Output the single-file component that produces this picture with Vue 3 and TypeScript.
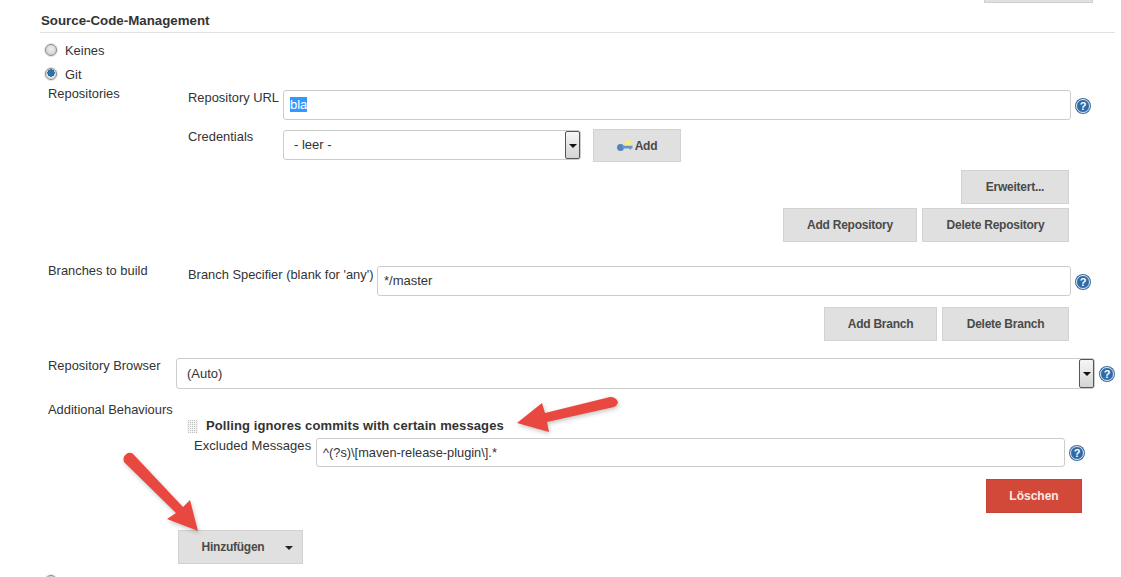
<script setup lang="ts">
const none = 'Keines'
</script>

<template>
  <div class="page">
    <div class="topbar"><div class="top-btn"></div></div>
    <h2 class="heading">Source-Code-Management</h2>
    <div class="body">
      <div class="radio-row"><span class="radio"></span><span>{{ none }}</span></div>
      <div class="radio-row"><span class="radio on"></span><span>Git</span></div>

      <div class="section repos">
        <div class="side">Repositories</div>
        <div class="main">
          <div class="row">
            <label class="lab w95">Repository URL</label>
            <div class="field url"><span class="sel">bla</span></div>
            <span class="help">?</span>
          </div>
          <div class="row cred">
            <label class="lab w95">Credentials</label>
            <div class="field select credsel">
              <span>- leer -</span>
              <span class="drop"></span>
            </div>
            <button class="btn add">
              <svg class="key" width="16" height="11" viewBox="0 0 16 11">
                <circle cx="11" cy="3" r="3" fill="#f6f07a" />
                <ellipse cx="3.5" cy="7.5" rx="3.5" ry="3.4" fill="#5583bb" />
                <path d="M5 5.8h10.5v2.6h-1.4v1h-1.6v-1H5z" fill="#6b93c5" />
              </svg>
              <span>Add</span>
            </button>
          </div>
          <div class="actions first"><button class="btn erw">Erweitert...</button></div>
          <div class="actions tight">
            <button class="btn addrepo">Add Repository</button>
            <button class="btn delrepo">Delete Repository</button>
          </div>
        </div>
      </div>

      <div class="section branches">
        <div class="side">Branches to build</div>
        <div class="main">
          <div class="row">
            <label class="lab branchlab">Branch Specifier (blank for 'any')</label>
            <input class="field branch" value="*/master" readonly />
            <span class="help">?</span>
          </div>
          <div class="actions branchact">
            <button class="btn addbr">Add Branch</button>
            <button class="btn delbr">Delete Branch</button>
          </div>
        </div>
      </div>

      <div class="browser">
        <div class="browserlab">Repository Browser</div>
        <div class="field select browsersel">
          <span>(Auto)</span>
          <span class="drop"></span>
        </div>
        <span class="help">?</span>
      </div>

      <div class="behav-label">Additional Behaviours</div>
      <div class="behav">
        <div class="behav-title"><span class="handle"></span><strong>Polling ignores commits with certain messages</strong></div>
        <div class="row excl">
          <label class="lab excllab">Excluded Messages</label>
          <input class="field exclin" value="^(?s)\[maven-release-plugin\].*" readonly />
          <span class="help exclhelp">?</span>
        </div>
        <div class="actions delete"><button class="btn danger">Löschen</button></div>
      </div>
      <button class="btn hinzu">Hinzufügen<span class="caret"></span></button>
      <span class="radio cut"></span>
    </div>

    <svg class="arrows" width="1121" height="577" viewBox="0 0 1121 577">
      <g fill="#e8483f">
        <path d="M517 423 L542 403 L545 413 L610 397 Q616 397 618 402 Q617 406 614 407 L547 422 L549 432 Z" />
        <path d="M198 531 L167 519 L176 513 L124 462 Q122 456 128 453 Q132 452 134 455 L183 507 L190 500 Z" />
      </g>
    </svg>
  </div>
</template>

<style>
html, body { margin: 0; background: #fff; }
</style>

<style scoped>
.page {
  position: relative;
  width: 1121px;
  height: 577px;
  overflow: hidden;
  background: #fff;
  color: #333;
  font: 12.9px/15px "Liberation Sans", Arial, sans-serif;
}
.topbar { display: flex; justify-content: flex-end; height: 3px; padding-right: 28px; overflow: hidden; }
.top-btn { width: 109px; height: 3px; background: #e0e0e0; border: 1px solid #cfcfcf; border-top: 0; box-sizing: border-box; }
.heading {
  margin: 10px 6px 0 40px;
  padding: 0 0 4px 1px;
  border-bottom: 1px solid #e2e2e2;
  font-size: 13.3px;
  line-height: 15px;
  font-weight: 700;
  color: #333;
}
.body { padding-left: 48px; }
.radio-row { display: flex; align-items: center; height: 24px; margin-left: -3px; gap: 8px; }
.radio-row:first-child { margin-top: 5px; }
.radio {
  flex: none;
  width: 12px;
  height: 12px;
  box-sizing: border-box;
  border-radius: 50%;
  border: 1px solid #8a8a8a;
  background: radial-gradient(circle at 50% 40%, #eee, #c9c9c9);
  box-shadow: 0 0 0 1px #e4e4e4;
}
.radio.on { background: radial-gradient(circle at 50% 40%, #1f77b4 0 2.6px, #0b3f66 3.4px, #e2e2e2 3.8px); }
.radio.cut { display: block; margin: 11px 0 0 -3px; }
.section { display: flex; }
.side { width: 140px; flex: none; }
.main { width: 953px; flex: none; }
.repos .main { padding-top: 4px; }
.row { display: flex; align-items: flex-start; }
.lab { flex: none; }
.w95 { width: 95px; }
.field {
  display: flex;
  align-items: center;
  box-sizing: border-box;
  height: 30px;
  border: 1px solid #cccccc;
  border-radius: 3px;
  background: #fff;
  color: #333;
  font: inherit;
  font-size: 13px;
  outline: none;
}
.url { width: 788px; padding: 0 0 2px 6px; }
.sel { background: #3399ff; color: #fff; }
.help {
  flex: none;
  width: 14px;
  height: 14px;
  margin: 9px 0 0 5px;
  box-sizing: border-box;
  border-radius: 50%;
  background: #2f6aa6;
  border: 1px solid #dfe8f2;
  box-shadow: 0 0 0 1px #44719f;
  color: #fff;
  font-size: 11px;
  font-weight: 700;
  line-height: 12px;
  text-align: center;
}
.exclhelp { margin-top: 8px; }
.cred { margin-top: 9px; }
.select { position: relative; padding-left: 10px; }
.credsel { width: 298px; margin-top: 1px; padding-bottom: 2px; }
.drop {
  position: absolute;
  right: 0;
  top: 0;
  bottom: 0;
  width: 15px;
  box-sizing: border-box;
  border: 1px solid #555;
  border-radius: 2px;
  background: linear-gradient(#f6f6f6, #d4d4d4);
}
.drop::after {
  content: "";
  position: absolute;
  left: 3px;
  top: 12px;
  border: 4px solid transparent;
  border-top: 4px solid #111;
  border-bottom: 0;
}
.btn {
  display: inline-block;
  box-sizing: border-box;
  height: 34px;
  padding: 0;
  border: 1px solid #d2d2d2;
  background: #e0e0e0;
  color: #4a4a4a;
  font: 700 12px/16px "Liberation Sans", Arial, sans-serif;
  letter-spacing: -0.25px;
  text-align: center;
}
.add {
  display: flex;
  align-items: center;
  justify-content: center;
  gap: 2px;
  width: 88px;
  height: 33px;
  margin-left: 12px;
}
.actions { display: flex; justify-content: flex-end; gap: 5px; width: 881px; }
.first { margin-top: 8px; }
.tight { margin-top: 4px; }
.erw { width: 108px; }
.addrepo { width: 134px; }
.delrepo { width: 147px; }
.branches { margin-top: 21px; }
.branches .main { padding-top: 3px; }
.branchlab { width: 189px; margin-top: 1px; white-space: nowrap; }
.branch { width: 694px; padding: 0 0 2px 6px; }
.branchact { margin-top: 11px; }
.addbr { width: 113px; }
.delbr { width: 127px; }
.browser { display: flex; align-items: flex-start; margin-top: 17px; }
.browserlab { width: 128px; flex: none; }
.browsersel { width: 919px; height: 31px; }
.behav-label { margin-top: 13px; }
.behav { padding-left: 139px; }
.behav-title { display: flex; align-items: flex-start; height: 20px; margin-top: 1px; }
.behav-title strong { font-size: 13px; letter-spacing: 0.1px; }
.handle {
  width: 11px;
  height: 13px;
  margin: 2px 8px 0 0;
  background: conic-gradient(#c2c2c2 25%, #f4f4f4 0) 0 0 / 2px 2px;
}
.excl { padding-left: 7px; }
.excllab { width: 122px; margin-top: 0; font-size: 13px; letter-spacing: 0.05px; white-space: nowrap; line-height: 15px; }
.exclin { width: 749px; height: 29px; padding: 0 0 0 6px; font-size: 12.8px; }
.delete { width: 895px; margin-top: 12px; }
.danger { width: 96px; background: #d24939; border-color: #c44434; color: #fbe9e6; letter-spacing: 0; }
.hinzu { display: block; position: relative; width: 125px; margin: 17px 0 0 130px; padding-right: 15px; }
.caret {
  position: absolute;
  right: 9px;
  top: 15px;
  border: 4px solid transparent;
  border-top: 4px solid #222;
  border-bottom: 0;
}
.arrows { position: absolute; left: 0; top: 0; pointer-events: none; filter: drop-shadow(1px 2px 2px rgba(0, 0, 0, 0.22)); }
</style>
